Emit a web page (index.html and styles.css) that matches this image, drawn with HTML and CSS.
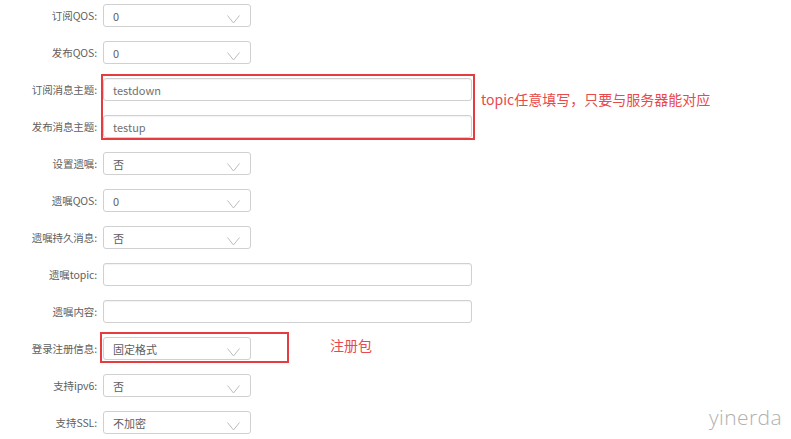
FILE: index.html
```html
<!DOCTYPE html>
<html lang="zh-CN">
<head>
<meta charset="utf-8">
<title>MQTT 设置</title>
<link rel="stylesheet" href="styles.css">
</head>
<body>
<div class="page">
  <form class="form">
    <div class="row"><label class="label">订阅QOS:</label><div class="select"><span class="value">0</span><svg class="chev" width="13" height="9" viewBox="0 0 13 9"><polyline points="0.5,0.5 6.5,8 12.5,0.5"/></svg></div></div>
    <div class="row"><label class="label">发布QOS:</label><div class="select"><span class="value">0</span><svg class="chev" width="13" height="9" viewBox="0 0 13 9"><polyline points="0.5,0.5 6.5,8 12.5,0.5"/></svg></div></div>
    <div class="row"><label class="label">订阅消息主题:</label><div class="input"><span class="value">testdown</span></div></div>
    <div class="row"><label class="label">发布消息主题:</label><div class="input"><span class="value">testup</span></div></div>
    <div class="row"><label class="label">设置遗嘱:</label><div class="select"><span class="value">否</span><svg class="chev" width="13" height="9" viewBox="0 0 13 9"><polyline points="0.5,0.5 6.5,8 12.5,0.5"/></svg></div></div>
    <div class="row"><label class="label">遗嘱QOS:</label><div class="select"><span class="value">0</span><svg class="chev" width="13" height="9" viewBox="0 0 13 9"><polyline points="0.5,0.5 6.5,8 12.5,0.5"/></svg></div></div>
    <div class="row"><label class="label">遗嘱持久消息:</label><div class="select"><span class="value">否</span><svg class="chev" width="13" height="9" viewBox="0 0 13 9"><polyline points="0.5,0.5 6.5,8 12.5,0.5"/></svg></div></div>
    <div class="row"><label class="label">遗嘱topic:</label><div class="input"><span class="value"></span></div></div>
    <div class="row"><label class="label">遗嘱内容:</label><div class="input"><span class="value"></span></div></div>
    <div class="row"><label class="label">登录注册信息:</label><div class="select"><span class="value">固定格式</span><svg class="chev" width="13" height="9" viewBox="0 0 13 9"><polyline points="0.5,0.5 6.5,8 12.5,0.5"/></svg></div></div>
    <div class="row"><label class="label">支持ipv6:</label><div class="select"><span class="value">否</span><svg class="chev" width="13" height="9" viewBox="0 0 13 9"><polyline points="0.5,0.5 6.5,8 12.5,0.5"/></svg></div></div>
    <div class="row"><label class="label">支持SSL:</label><div class="select"><span class="value">不加密</span><svg class="chev" width="13" height="9" viewBox="0 0 13 9"><polyline points="0.5,0.5 6.5,8 12.5,0.5"/></svg></div></div>
  </form>

  <div class="mark mark-topic"></div>
  <div class="note note-topic">topic任意填写，只要与服务器能对应</div>
  <div class="mark mark-reg"></div>
  <div class="note note-reg">注册包</div>
  <div class="watermark">yinerda</div>
</div>
</body>
</html>
```

FILE: styles.css
```css
html, body {
  margin: 0;
  padding: 0;
  background: #ffffff;
}

.page {
  position: relative;
  width: 791px;
  height: 439px;
  overflow: hidden;
  font-family: "Noto Sans CJK SC", "Noto Sans", sans-serif;
}

.form {
  display: flex;
  flex-direction: column;
  gap: 14px;
  padding-top: 4px;
  margin: 0;
}

.row {
  display: flex;
  align-items: center;
  height: 23px;
  gap: 6px;
}

.label {
  width: 97px;
  text-align: right;
  font-size: 10.5px;
  color: #606060;
  white-space: nowrap;
  letter-spacing: -0.1px;
}

.select,
.input {
  box-sizing: border-box;
  height: 23px;
  border: 1px solid #d0d0d0;
  border-radius: 3px;
  display: flex;
  align-items: center;
  padding: 0 10px 0 9px;
  background: #fff;
}

.select {
  width: 148px;
  justify-content: space-between;
}

.input {
  width: 369px;
  box-shadow: inset 0 1px 1px rgba(0, 0, 0, 0.05);
}

.value {
  font-size: 11px;
  color: #606060;
}

.input .value {
  color: #707070;
}

.chev {
  margin-top: 7px;
  fill: none;
  stroke: #bdbdbd;
  stroke-width: 1;
}

.mark {
  position: absolute;
  border: 2px solid #e63b3f;
  box-sizing: border-box;
}

.mark-topic {
  left: 101px;
  top: 74px;
  width: 374px;
  height: 66px;
}

.mark-reg {
  left: 100px;
  top: 332px;
  width: 189px;
  height: 31px;
}

.note {
  position: absolute;
  font-size: 14px;
  line-height: 20px;
  color: #e84a4c;
  white-space: nowrap;
}

.note-topic {
  left: 481px;
  top: 89px;
}

.note-reg {
  left: 330px;
  top: 335px;
}

.watermark {
  position: absolute;
  left: 709px;
  top: 403px;
  font-family: "Open Sans", "Noto Sans", sans-serif;
  font-weight: 300;
  font-size: 21px;
  line-height: 28px;
  color: #b0b0b0;
  letter-spacing: 0.4px;
}
```
